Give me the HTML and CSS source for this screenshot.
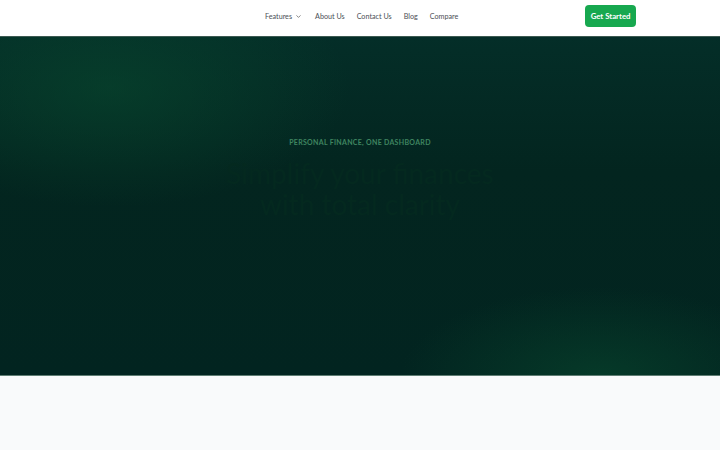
FILE: index.html
```html
<!DOCTYPE html>
<html lang="en">
<head>
<meta charset="utf-8">
<title>Personal Finance</title>
<link rel="stylesheet" href="styles.css">
</head>
<body>
<header class="header">
  <div class="header-inner">
    <div class="logo-space"></div>
    <nav class="nav">
      <a class="nav-link" href="#">Features <svg class="chev" viewBox="0 0 10 10" width="7" height="7"><path d="M2.5 3.8 L5 6.3 L7.5 3.8" fill="none" stroke="#666" stroke-width="1.1" stroke-linecap="round" stroke-linejoin="round"/></svg></a>
      <a class="nav-link" href="#">About Us</a>
      <a class="nav-link" href="#">Contact Us</a>
      <a class="nav-link" href="#">Blog</a>
      <a class="nav-link" href="#">Compare</a>
    </nav>
    <a class="cta" href="#">Get Started</a>
  </div>
</header>
<section class="hero">
  <div class="hero-content">
    <p class="eyebrow">PERSONAL FINANCE, ONE DASHBOARD</p>
    <h1 class="title">Simplify your finances<br>with total clarity</h1>
  </div>
</section>
<section class="below"></section>
</body>
</html>
```

FILE: styles.css
```css
* { box-sizing: border-box; }
html, body { margin: 0; padding: 0; }
body {
  font-family: "Lato", "Inter", "Liberation Sans", sans-serif;
  background: #f9fafb;
  width: 720px;
  overflow: hidden;
}
.header {
  height: 37px;
  background: #ffffff;
  border-bottom: 1px solid #3c5a52;
}
.header-inner {
  height: 32px;
  display: flex;
  align-items: center;
  padding: 0 84px 0 84px;
}
.logo-space { width: 181px; }
.nav {
  display: flex;
  align-items: center;
  gap: 12px;
}
.nav-link {
  font-size: 7.2px;
  color: #4b4f56;
  text-decoration: none;
  display: flex;
  align-items: center;
  gap: 3px;
}
.nav-link:first-child { margin-right: 1px; }
.chev { display: block; }
.cta {
  margin-left: auto;
  background: #17a84f;
  color: #ffffff;
  font-weight: 700;
  font-size: 7.8px;
  text-decoration: none;
  height: 22px;
  padding: 0 5.5px;
  border-radius: 4px;
  display: flex;
  align-items: center;
}
.hero {
  height: 339px;
  background:
    radial-gradient(ellipse 240px 120px at 110px 50px, rgba(8, 72, 46, 0.6), rgba(8, 72, 46, 0) 100%),
    radial-gradient(ellipse 200px 90px at 600px 340px, rgba(8, 72, 46, 0.6), rgba(8, 72, 46, 0) 100%),
    linear-gradient(180deg, #042e28 0%, #03251f 40%, #022420 100%);
  border-bottom: 1px solid #5f7d73;
  display: flex;
  justify-content: center;
}
.hero-content {
  padding-top: 101px;
  text-align: center;
}
.eyebrow {
  margin: 0;
  font-size: 7px;
  font-weight: 700;
  letter-spacing: 0.3px;
  color: #3f8560;
}
.title {
  margin: 12px 0 0;
  font-size: 28px;
  line-height: 31px;
  font-weight: 400;
  color: #04291f;
}
.below {
  height: 80px;
  background: #f9fafb;
}
```
